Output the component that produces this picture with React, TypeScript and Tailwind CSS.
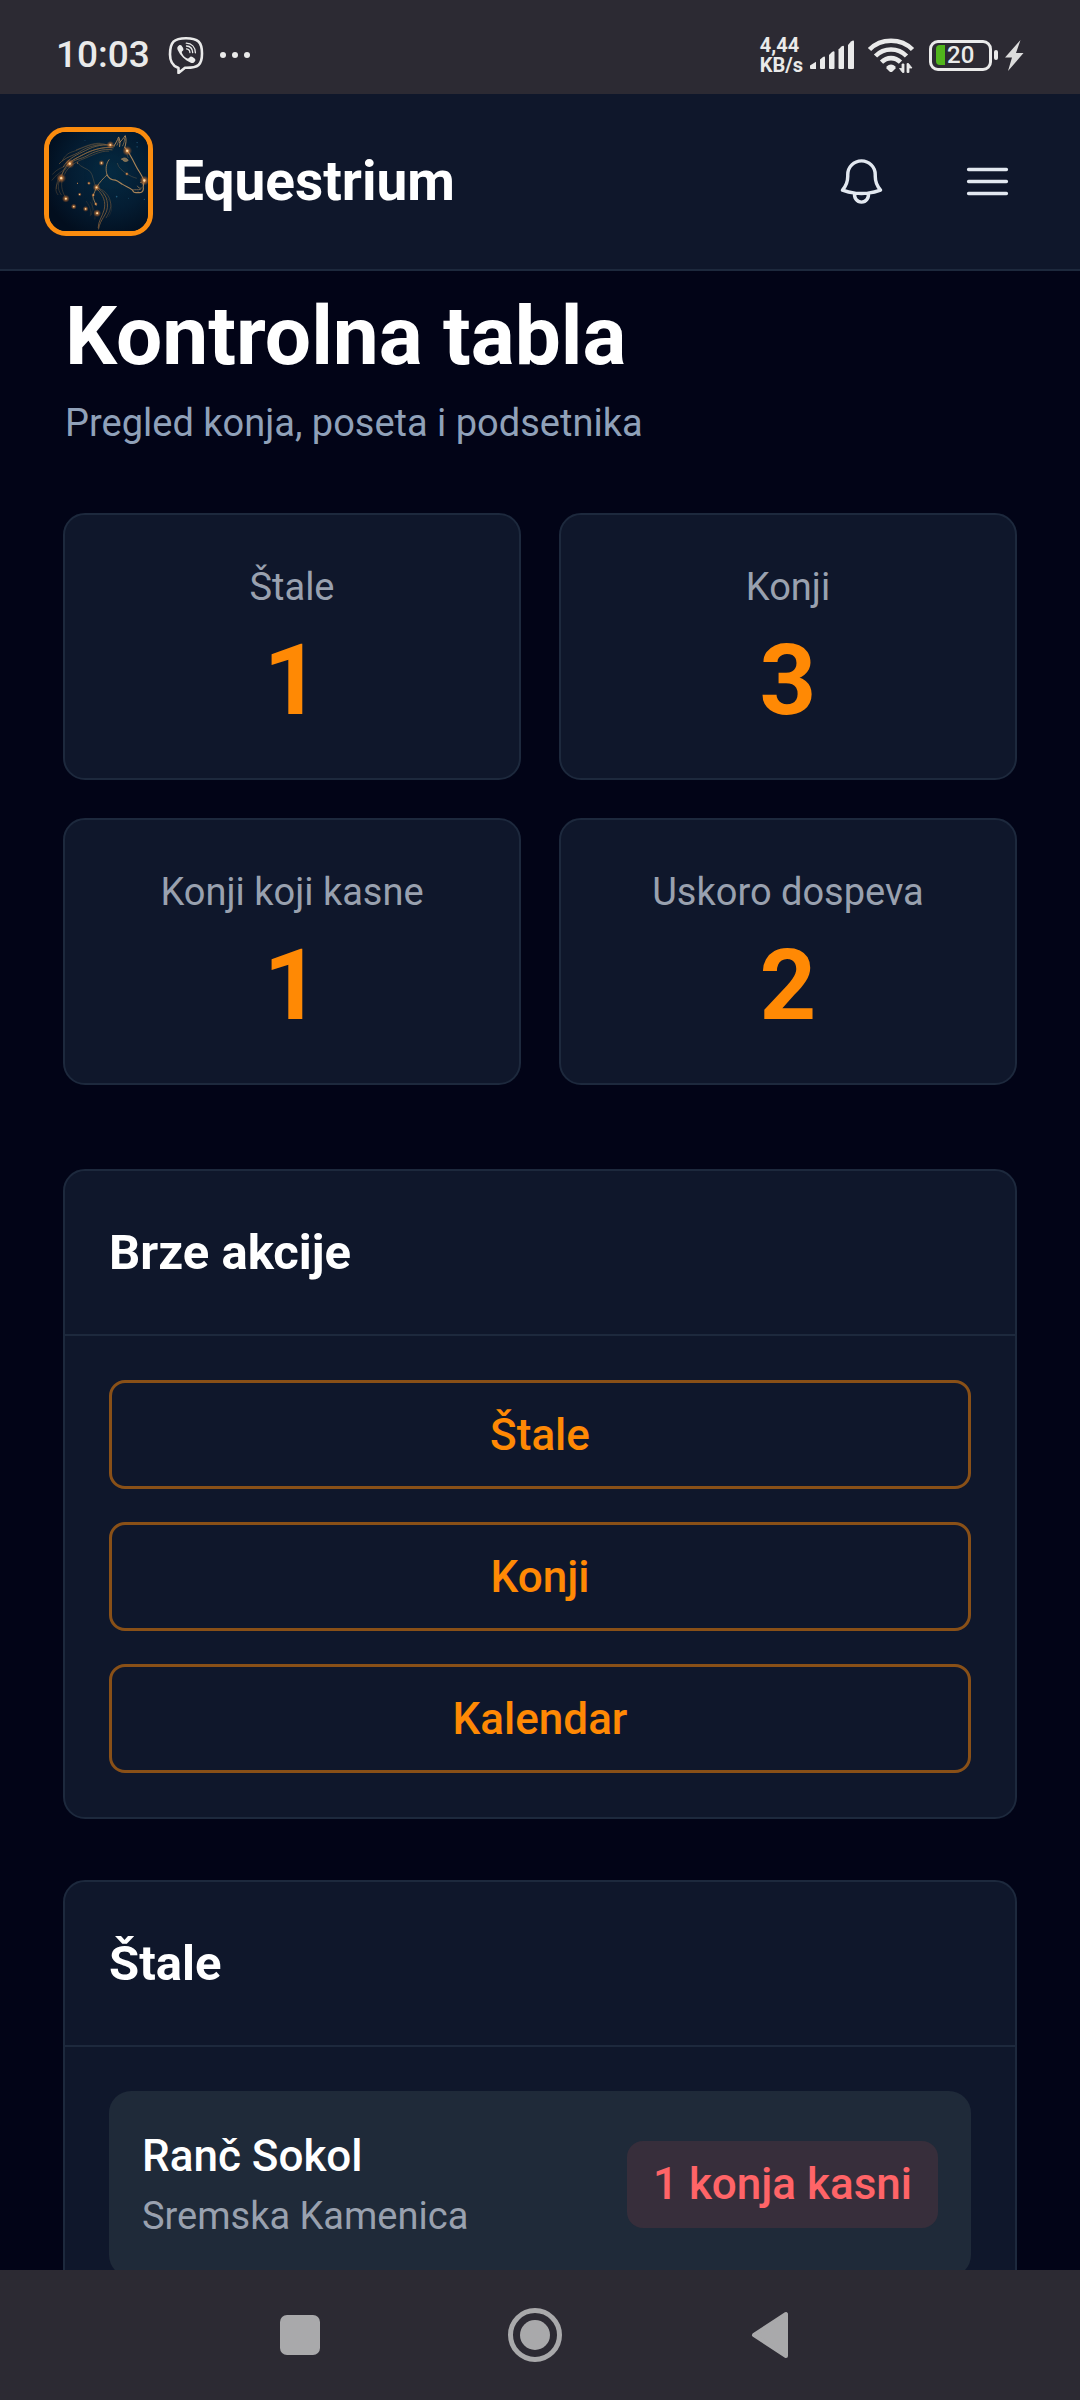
import type { ReactNode } from "react";

const stats = [
  { label: "Štale", value: 1 },
  { label: "Konji", value: 3 },
  { label: "Konji koji kasne", value: 1 },
  { label: "Uskoro dospeva", value: 2 },
];

const quickActions = ["Štale", "Konji", "Kalendar"];

const stables = [
  { name: "Ranč Sokol", place: "Sremska Kamenica", badge: "1 konja kasni" },
];

function ViberIcon() {
  return (
    <svg viewBox="0 0 36 38" className="h-[38px] w-9" fill="none" aria-hidden="true">
      <path
        d="M9.5 31.5C4.500 29.500 2 26 2 18.500C2 6 6 2.200 18 2.200S34 6 34 17.500S30 31.800 18.500 31.800H17L10.500 37V31.900Z"
        stroke="#eaeaea"
        strokeWidth="2.600"
        strokeLinejoin="round"
      />
      <path
        d="M11.200 9.300c1.300-.9 2.300-.2 3.600 2.100c1 1.800.8 2.700-.3 3.600c-.9.8-.9 1.200-.2 2.700c1 2 2.600 3.600 4.600 4.500c1.200.5 1.700.3 2.600-.7c1-1.200 1.900-1.200 3.800.1c2.200 1.500 2.600 2.300 1.700 3.600c-1.100 1.600-2.500 2.300-4.200 1.600c-5.900-2.600-10.500-7-13.200-13.100c-.8-1.800-.2-3.300 1.600-4.400Z"
        fill="#eaeaea"
      />
      <path
        d="M18.500 12.800c2 .2 3.300 1.600 3.400 3.700M18.500 10c3.700.2 6 2.600 6.200 6.600M18.300 7.200c5.400.2 8.900 3.900 9.100 9.600"
        stroke="#eaeaea"
        strokeWidth="1.300"
        strokeLinecap="round"
      />
    </svg>
  );
}

function SignalIcon() {
  return (
    <svg viewBox="0 0 46 30" className="h-[30px] w-[46px]" fill="#eaeaea" aria-hidden="true">
      <path d="M1 25.500L7 21.800V29H2a1 1 0 0 1-1-1Z" />
      <path d="M11 19.500l3-2.500q2-1 2 .5V28a1 1 0 0 1-1 1h-3a1 1 0 0 1-1-1Z" />
      <path d="M20 15l3-3q2.500-1.500 2.500.5V28a1 1 0 0 1-1 1H21a1 1 0 0 1-1-1Z" />
      <path d="M29.500 9.500l3-3q2.500-1.500 2.500.5V28a1 1 0 0 1-1 1h-3.500a1 1 0 0 1-1-1Z" />
      <path d="M39 5l3-3.500Q45-.5 45 1.500V28a1 1 0 0 1-1 1h-4a1 1 0 0 1-1-1Z" />
    </svg>
  );
}

function WifiIcon() {
  return (
    <svg viewBox="0 0 48 36" className="h-9 w-12" fill="none" aria-hidden="true">
      <g stroke="#eaeaea" strokeWidth="4.600">
        <path d="M2.500 12.500C14 .8 34 .8 45.500 12.500" />
        <path d="M8.500 19C17 10.300 31 10.300 39.500 19" />
        <path d="M14.500 25.200C20 19.800 28 19.800 33.500 25.200" />
      </g>
      <path d="M19.500 29.500q4.500-4 9 0v2L25.500 34.500q-1.500 1.200-3 0L19.500 31.500Z" fill="#eaeaea" />
      <path d="M37 27v8.500h-1.500L32.500 31.500H35V27ZM40 35.500V26.500h1.500L45 31H42v4.500Z" fill="#eaeaea" stroke="#eaeaea" strokeWidth=".8" />
    </svg>
  );
}

function BoltIcon() {
  return (
    <svg viewBox="0 0 20 31" className="h-[31px] w-5" fill="#dcdcdc" aria-hidden="true">
      <path d="M16.500 0L1 17.500h7L4 31L19.500 13H12Z" />
    </svg>
  );
}

function HorseLogo() {
  const stars: [number, number, number][] = [
    [104, 146, 5],
    [78, 190, 5],
    [92, 252, 4],
    [187, 296, 4],
    [278, 107, 5],
    [330, 197, 5],
    [227, 89, 4],
    [185, 218, 4],
    [200, 144, 3],
    [277, 177, 2],
    [116, 276, 3],
    [152, 283, 3],
    [134, 239, 2],
    [162, 205, 2],
    [127, 205, 1],
    [128, 144, 1],
    [183, 268, 2],
    [175, 241, 2],
  ];
  return (
    <svg viewBox="41 50 300 300" className="h-full w-full" fill="none" role="img" aria-label="Equestrium">
      <defs>
        <radialGradient id="night" cx="0.62" cy="0.4" r="0.7">
          <stop offset="0" stopColor="#062b42" />
          <stop offset="0.55" stopColor="#041d33" />
          <stop offset="1" stopColor="#020e1e" />
        </radialGradient>
        <radialGradient id="glow">
          <stop offset="0" stopColor="#ffd9a0" />
          <stop offset="0.3" stopColor="#e88a3a" stopOpacity="0.7" />
          <stop offset="1" stopColor="#b85a20" stopOpacity="0" />
        </radialGradient>
      </defs>
      <rect x="41" y="50" width="300" height="300" fill="url(#night)" />
      <g stroke="#a88459" strokeLinecap="round" strokeLinejoin="round">
        <path strokeWidth="3.500" d="M272 98C284 112 294 132 304 152C314 172 326 184 329 200C328 208 325 214 327 222C327 231 320 235 311 233C303 235 296 232 294 226C287 219 272 214 263 208C256 204 250 198 242 196C232 195 222 190 217 180" />
        <path strokeWidth="2.500" d="M223 134C213 146 212 164 217 180C206 190 194 202 185 218C182 228 177 234 174 244C176 256 180 262 184 272" />
        <path strokeWidth="3" d="M238 92C243 84 248 76 252 65C256 74 257 82 255 94M255 82C262 74 266 70 272 61C276 72 275 86 270 98" />
        <path strokeWidth="2" d="M247 90C250 84 252 79 252 72M264 92C268 84 270 78 270 70" />
        <path strokeWidth="2.500" d="M262 132C268 126 277 129 281 136C275 141 266 140 262 132Z" fill="#77705c" />
        <path strokeWidth="2" d="M318 203C322 200 325 203 324 208M294 226C303 223 310 227 318 224M309 214C311 219 316 222 321 220" />
        <path strokeWidth="1.800" opacity=".5" d="M128 144C138 158 156 160 166 170C176 182 174 200 184 218M278 107C276 116 278 122 281 128M277 177C286 182 296 188 306 190M248 145C252 160 264 168 277 177" />
      </g>
      <g stroke="#8f6b42" strokeLinecap="round" strokeWidth="2.200">
        <path d="M240 93C210 84 178 92 152 106C128 118 100 128 84 156" />
        <path d="M236 98C206 94 172 104 146 118C124 130 108 134 96 150" />
        <path d="M232 104C204 100 176 110 156 122C138 132 120 132 104 146" />
        <path d="M228 90C196 84 160 92 134 110C114 122 90 126 72 146" opacity=".8" />
        <path d="M226 96C190 96 154 112 130 126C108 138 84 152 78 190" />
        <path d="M222 108C196 106 166 124 144 132C124 140 98 154 88 178" opacity=".6" />
        <path d="M214 88C184 76 156 92 124 104" opacity=".5" />
        <path d="M196 86C164 84 134 104 106 112C96 116 86 126 82 136" opacity=".5" />
        <path d="M104 146C84 158 66 160 52 178M100 152C80 172 62 178 50 196M94 160C76 180 60 200 64 222" opacity=".45" />
        <path d="M78 190C66 204 66 224 78 240M74 196C60 210 58 228 68 240M84 186C76 206 78 226 90 246" opacity=".45" />
      </g>
      <g stroke="#7d5c3c" strokeLinecap="round" strokeWidth="2.500">
        <path d="M185 218C206 228 220 250 218 278C216 302 196 314 191 344" />
        <path d="M188 224C206 242 214 262 208 286C202 308 190 320 190 340" />
        <path d="M192 220C216 230 230 252 228 276C226 292 218 302 214 310" opacity=".6" />
        <path d="M174 244C168 262 176 278 170 300M166 262C176 282 182 292 180 314M154 260C166 276 170 290 166 304" opacity=".4" strokeWidth="1.800" />
        <path d="M206 240C236 262 236 284 222 306" opacity=".35" strokeWidth="1.800" />
      </g>
      {stars.map(([x, y, r]) => (
        <g key={`${x}-${y}`}>
          <circle cx={x} cy={y} r={r * 3} fill="url(#glow)" />
          <circle cx={x} cy={y} r={r * 0.7} fill="#ffdca8" />
        </g>
      ))}
      <g fill="#2d6f93" opacity=".7">
        <circle cx="308" cy="82" r="2" />
        <circle cx="308" cy="95" r="2" />
        <circle cx="246" cy="246" r="2.500" />
        <circle cx="282" cy="251" r="1.500" />
        <circle cx="330" cy="254" r="2" />
        <circle cx="150" cy="76" r="1.500" />
      </g>
    </svg>
  );
}

function StatusBar() {
  return (
    <div className="flex h-[94px] shrink-0 items-center bg-[#2c2a33] pt-4 pr-14 pl-14 text-[#eaeaea]">
      <span className="text-[37px] leading-10 font-medium">10:03</span>
      <div className="ml-[18px]">
        <ViberIcon />
      </div>
      <div className="ml-4 flex gap-1.5">
        <span className="size-1.5 rounded-full bg-current" />
        <span className="size-1.5 rounded-full bg-current" />
        <span className="size-1.5 rounded-full bg-current" />
      </div>
      <div className="ml-auto flex items-center">
        <div className="flex flex-col text-[20px] leading-5 font-bold">
          <span>4,44</span>
          <span>KB/s</span>
        </div>
        <div className="ml-1.5 flex items-center gap-3">
          <SignalIcon />
          <WifiIcon />
        </div>
        <div className="ml-3.5 flex items-center">
          <div className="flex h-[31px] w-[63px] items-center gap-0.5 rounded-[9px] border-3 border-current pl-1">
            <span className="h-5 w-[9px] rounded-l-sm bg-[#50b51c]" />
            <span className="text-[24px] leading-6 font-medium">20</span>
          </div>
          <span className="ml-0.5 h-2.5 w-1 rounded-sm bg-current" />
        </div>
        <div className="ml-1.5">
          <BoltIcon />
        </div>
      </div>
    </div>
  );
}

function HeaderButton({ label, path }: { label: string; path: string }) {
  return (
    <button type="button" aria-label={label} className="flex size-24 items-center justify-center text-slate-200">
      <svg viewBox="0 0 24 24" className="size-[55px]" fill="none" stroke="currentColor" strokeWidth="1.5" strokeLinecap="round" strokeLinejoin="round">
        <path d={path} />
      </svg>
    </button>
  );
}

function Header() {
  return (
    <header className="flex h-[177px] shrink-0 items-center border-b-2 border-slate-800 bg-slate-900 pr-[45px] pl-11">
      <a href="#" className="flex items-center gap-5 text-white">
        <span className="block size-[109px] overflow-hidden rounded-[22px] border-5 border-[#fb8c0e]">
          <HorseLogo />
        </span>
        <span className="text-[55px] leading-[77px] font-bold">Equestrium</span>
      </a>
      <div className="ml-auto flex gap-[30px]">
        <HeaderButton
          label="Obaveštenja"
          path="M14.857 17.082a23.848 23.848 0 0 0 5.454-1.310A8.967 8.967 0 0 1 18 9.750V9A6 6 0 0 0 6 9v.75a8.967 8.967 0 0 1-2.312 6.022c1.733.64 3.560 1.085 5.455 1.310m5.714 0a24.255 24.255 0 0 1-5.714 0m5.714 0a3 3 0 1 1-5.714 0"
        />
        <HeaderButton label="Meni" path="M3.750 6.750h16.500M3.750 12h16.500m-16.500 5.250h16.500" />
      </div>
    </header>
  );
}

function Panel({ title, children }: { title: string; children: ReactNode }) {
  return (
    <section className="rounded-[22px] border-2 border-slate-800 bg-slate-900">
      <div className="border-b-2 border-slate-800 px-11 py-11">
        <h2 className="text-[49px] leading-[75px] font-bold text-white">{title}</h2>
      </div>
      <div className="flex flex-col gap-[33px] p-11">{children}</div>
    </section>
  );
}

function NavBar() {
  return (
    <nav className="flex h-[130px] shrink-0 justify-center bg-[#2c2a33] pr-2.5 text-[#a9a9ab]">
      <button type="button" aria-label="Nedavne aplikacije" className="flex w-[235px] items-center justify-center">
        <span className="size-10 rounded-[7px] bg-current" />
      </button>
      <button type="button" aria-label="Početni ekran" className="flex w-[235px] items-center justify-center">
        <span className="flex size-[54px] items-center justify-center rounded-full border-5 border-current">
          <span className="size-[30px] rounded-full bg-current" />
        </span>
      </button>
      <button type="button" aria-label="Nazad" className="flex w-[235px] items-center justify-center">
        <svg viewBox="0 0 38 48" className="h-12 w-[38px]" fill="currentColor" stroke="currentColor" strokeWidth="4" strokeLinejoin="round">
          <path d="M3 24L35 3V45Z" />
        </svg>
      </button>
    </nav>
  );
}

export default function App() {
  return (
    <div className="flex h-screen flex-col bg-[#020417] font-['Roboto',sans-serif]">
      <StatusBar />
      <Header />
      <main className="min-h-0 flex-1 overflow-y-auto px-[63px] pt-4 [scrollbar-width:none]">
        <div className="px-0.5">
          <h1 className="text-[82px] leading-[99px] font-bold text-white">Kontrolna tabla</h1>
          <p className="mt-2.5 text-[38px] leading-[55px] text-slate-400">Pregled konja, poseta i podsetnika</p>
        </div>

        <div className="mt-[62px] grid grid-cols-2 gap-[38px]">
          {stats.map((s) => (
            <div key={s.label} className="rounded-[22px] border-2 border-slate-800 bg-slate-900 px-11 pt-[45px] pb-[43px] text-center">
              <p className="text-[38px] leading-[55px] text-gray-400">{s.label}</p>
              <p className="mt-2.5 text-[99px] leading-[110px] font-bold text-orange-400">{s.value}</p>
            </div>
          ))}
        </div>

        <div className="mt-[84px] flex flex-col gap-[61px] pb-[61px]">
          <Panel title="Brze akcije">
            {quickActions.map((a) => (
              <button
                key={a}
                type="button"
                className="flex h-[109px] items-center justify-center rounded-[16px] border-3 border-orange-400/50 text-[44px] leading-[66px] font-medium text-orange-400"
              >
                {a}
              </button>
            ))}
          </Panel>

          <Panel title="Štale">
            {stables.map((s) => (
              <div key={s.name} className="flex items-center justify-between rounded-[22px] bg-[#1f2a39] p-[33px]">
                <div>
                  <h3 className="text-[44px] leading-[65px] font-medium text-white">{s.name}</h3>
                  <p className="text-[38px] leading-[55px] text-gray-400">{s.place}</p>
                </div>
                <span className="rounded-[16px] bg-[#372e3b] px-[26px] py-[11px] text-[44px] leading-[65px] font-medium text-red-400">
                  {s.badge}
                </span>
              </div>
            ))}
          </Panel>
        </div>
      </main>
      <NavBar />
    </div>
  );
}
